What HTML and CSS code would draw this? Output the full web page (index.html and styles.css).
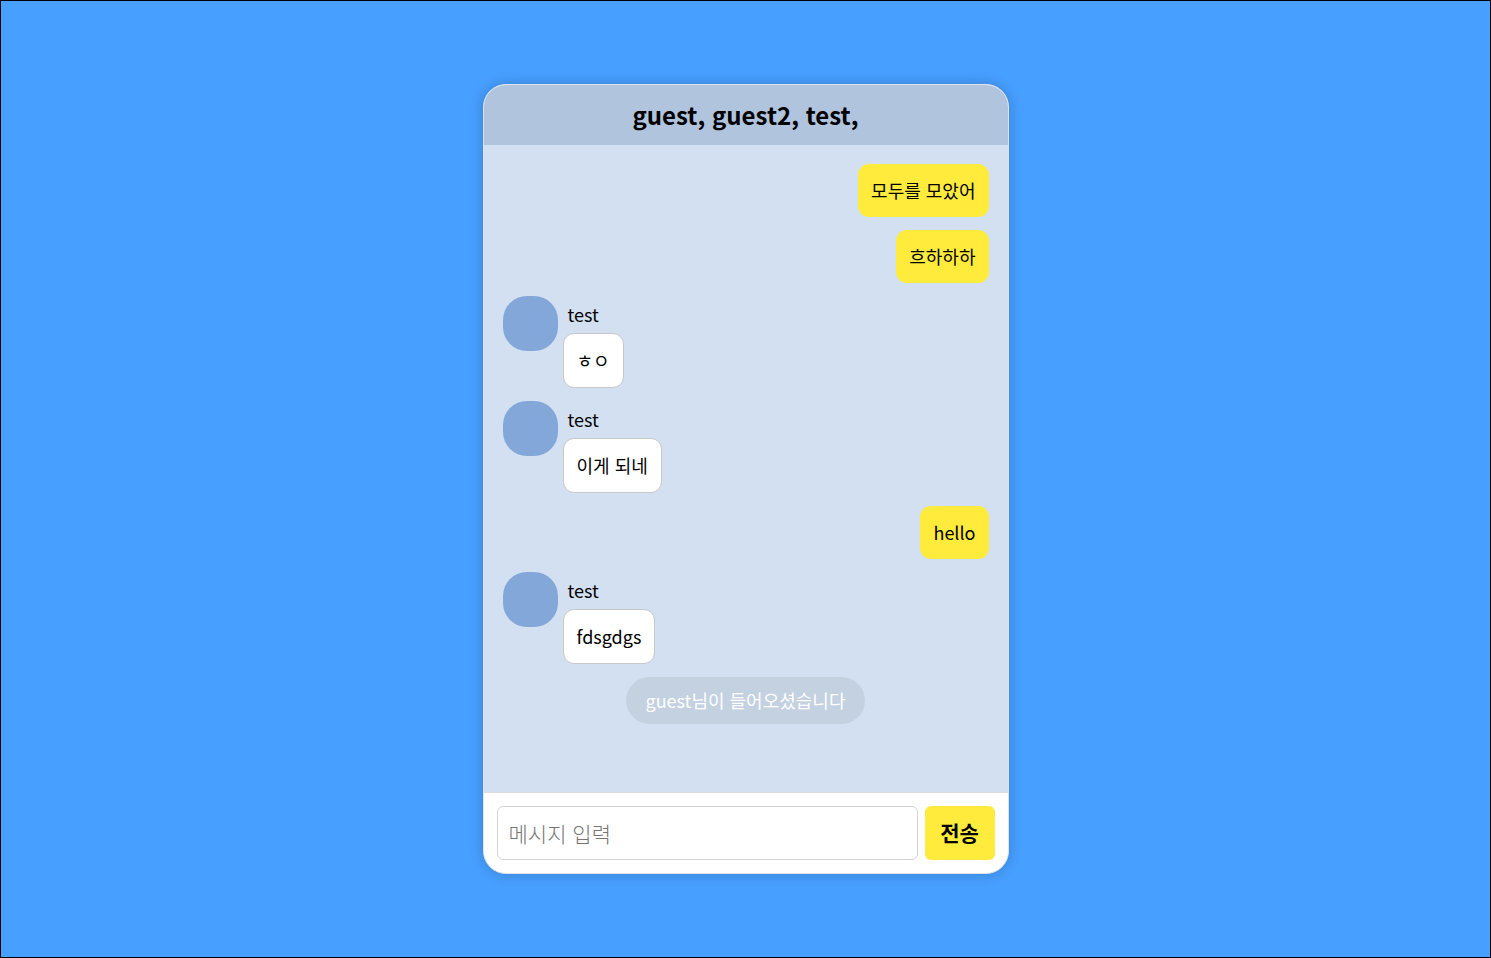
FILE: index.html
```html
<!DOCTYPE html>
<html lang="ko">
<head>
<meta charset="utf-8">
<title>Chat</title>
<link rel="stylesheet" href="styles.css">
</head>
<body>
<main class="chat">
  <header class="chat-header"><h1 class="chat-title">guest, guest2, test,</h1></header>
  <section class="messages">
    <p class="bubble mine">모두를 모았어</p>
    <p class="bubble mine">흐하하하</p>
    <article class="incoming">
      <div class="avatar"></div>
      <div class="content"><span class="sender">test</span><p class="bubble theirs">ㅎㅇ</p></div>
    </article>
    <article class="incoming">
      <div class="avatar"></div>
      <div class="content"><span class="sender">test</span><p class="bubble theirs">이게 되네</p></div>
    </article>
    <p class="bubble mine">hello</p>
    <article class="incoming">
      <div class="avatar"></div>
      <div class="content"><span class="sender">test</span><p class="bubble theirs">fdsgdgs</p></div>
    </article>
    <p class="notice">guest님이 들어오셨습니다</p>
  </section>
  <form class="composer">
    <input class="message-input" type="text" placeholder="메시지 입력" aria-label="메시지 입력">
    <button class="send" type="button">전송</button>
  </form>
</main>
</body>
</html>
```
FILE: styles.css
```css
* { box-sizing: border-box; }
body {
  margin: 0;
  min-height: 100vh;
  display: flex;
  align-items: center;
  justify-content: center;
  border: 1px solid #000;
  background: #479fff;
  color: #000;
  font-family: "Noto Sans CJK KR", sans-serif;
  font-size: 18px;
  line-height: 27px;
}
h1, p { margin: 0; }
.chat {
  width: 100%;
  max-width: 526px;
  height: 82.4vh;
  min-height: 600px;
  display: flex;
  flex-direction: column;
  overflow: hidden;
  border: 1px solid #dde4ec;
  border-radius: 23px;
  background: #fff;
  box-shadow: 0 0 13px rgba(0, 0, 0, 0.2);
}
.chat-header {
  padding: 13px;
  background: #b0c4de;
  text-align: center;
}
.chat-title {
  font-size: 24px;
  line-height: 34px;
  font-weight: 700;
}
.messages {
  flex: 1;
  display: flex;
  flex-direction: column;
  gap: 13px;
  padding: 19px;
  background: #d3e0f1;
}
.bubble {
  width: fit-content;
  padding: 13px;
  border-radius: 11px;
}
.mine {
  align-self: flex-end;
  background: #ffeb3b;
}
.incoming { display: flex; gap: 5px; }
.avatar {
  width: 55px;
  height: 55px;
  border-radius: 24px;
  background: #83a7d8;
}
.sender {
  display: block;
  padding: 5px;
}
.theirs {
  border: 1px solid #c8c8c8;
  background: #fff;
}
.notice {
  align-self: center;
  padding: 10px 20px;
  border-radius: 26px;
  background: #c4d1e1;
  color: #fff;
}
.composer {
  display: flex;
  gap: 7px;
  padding: 13px;
  border-top: 1px solid #ddd;
}
.message-input {
  flex: 1;
  min-width: 0;
  height: 54px;
  padding: 0 11px;
  border: 1px solid #d4d4d4;
  border-radius: 6px;
  font: inherit;
  font-size: 21px;
  font-weight: 300;
}
.message-input::placeholder { color: #757575; }
.send {
  width: 70px;
  padding: 0;
  border: 0;
  border-radius: 6px;
  background: #ffeb3b;
  color: #000;
  font: inherit;
  font-size: 21px;
  font-weight: 700;
}
```
